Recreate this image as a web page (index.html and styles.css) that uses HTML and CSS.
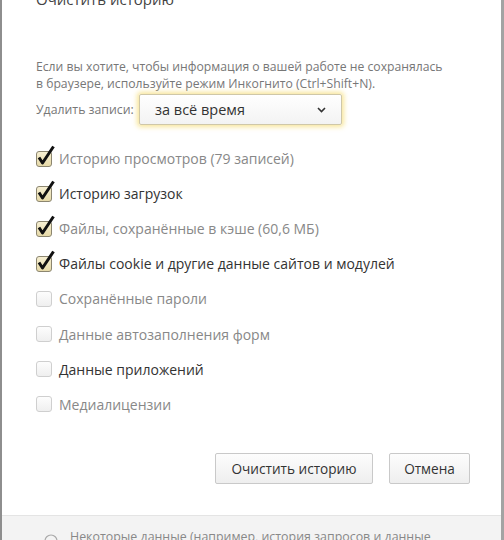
FILE: index.html
```html
<!DOCTYPE html>
<html lang="ru">
<head>
<meta charset="utf-8">
<link rel="stylesheet" href="styles.css">
</head>
<body>
<div class="dialog">
  <div class="content">
    <h1 class="title">Очистить историю</h1>
    <p class="desc">Если вы хотите, чтобы информация о вашей работе не сохранялась<br>в браузере, используйте режим Инкогнито (Ctrl+Shift+N).</p>
    <div class="period">
      <span class="period-label">Удалить записи:</span>
      <div class="select">
        <span>за всё время</span>
        <svg class="chev" width="9" height="6" viewBox="0 0 9 6"><path d="M1 1 L4.5 4.5 L8 1" fill="none" stroke="#333" stroke-width="1.6"/></svg>
      </div>
    </div>
    <ul class="list">
      <li class="item muted"><span class="cb"><span class="box on"></span><svg class="tick" width="20" height="22" viewBox="0 0 20 22"><path d="M3 12.5 L6.5 18 L17.5 1.5" fill="none" stroke="#111" stroke-width="3" stroke-linejoin="round"/></svg></span>Историю просмотров (79 записей)</li>
      <li class="item"><span class="cb"><span class="box on"></span><svg class="tick" width="20" height="22" viewBox="0 0 20 22"><path d="M3 12.5 L6.5 18 L17.5 1.5" fill="none" stroke="#111" stroke-width="3" stroke-linejoin="round"/></svg></span>Историю загрузок</li>
      <li class="item muted"><span class="cb"><span class="box on"></span><svg class="tick" width="20" height="22" viewBox="0 0 20 22"><path d="M3 12.5 L6.5 18 L17.5 1.5" fill="none" stroke="#111" stroke-width="3" stroke-linejoin="round"/></svg></span>Файлы, сохранённые в кэше (60,6 МБ)</li>
      <li class="item"><span class="cb"><span class="box on"></span><svg class="tick" width="20" height="22" viewBox="0 0 20 22"><path d="M3 12.5 L6.5 18 L17.5 1.5" fill="none" stroke="#111" stroke-width="3" stroke-linejoin="round"/></svg></span>Файлы cookie и другие данные сайтов и модулей</li>
      <li class="item muted"><span class="cb"><span class="box"></span></span>Сохранённые пароли</li>
      <li class="item muted"><span class="cb"><span class="box"></span></span>Данные автозаполнения форм</li>
      <li class="item"><span class="cb"><span class="box"></span></span>Данные приложений</li>
      <li class="item muted"><span class="cb"><span class="box"></span></span>Медиалицензии</li>
    </ul>
    <div class="actions">
      <button class="btn btn-clear">Очистить историю</button>
      <button class="btn btn-cancel">Отмена</button>
    </div>
  </div>
  <div class="footer">
    <svg class="info" width="14" height="14" viewBox="0 0 14 14"><circle cx="7" cy="7" r="6" fill="none" stroke="#aaa" stroke-width="1.2"/></svg>
    <span>Некоторые данные (например, история запросов и данные</span>
  </div>
</div>
</body>
</html>
```

FILE: styles.css
```css
* { box-sizing: border-box; }
html, body { margin: 0; padding: 0; }
body {
  width: 504px;
  height: 540px;
  overflow: hidden;
  background: #fff;
  font-family: "Open Sans", "Noto Sans", sans-serif;
}
.dialog {
  width: 504px;
  height: 540px;
  display: flex;
  flex-direction: column;
  border-left: 2px solid #8e8e8e;
  border-right: 3px solid #a3a3a3;
  background: #fff;
  overflow: hidden;
}
.content {
  padding-left: 34px;
  padding-right: 31px;
  flex: 1;
  display: flex;
  flex-direction: column;
}
.title {
  margin: -13px 0 0 0;
  font-size: 15px;
  line-height: 24px;
  font-weight: 400;
  color: #444;
}
.desc {
  margin: 47px 0 0 0;
  font-size: 12.2px;
  line-height: 17px;
  color: #777;
}
.period {
  display: flex;
  align-items: center;
  margin-top: 2px;
}
.period-label {
  font-size: 12.3px;
  color: #777;
  width: 103px;
}
.select {
  width: 203px;
  height: 31px;
  border: 1px solid #cfc7a8;
  border-radius: 2px;
  background: linear-gradient(#fff, #f3f3f3);
  box-shadow: 0 0 5px 2px rgba(246, 222, 120, 0.75);
  display: flex;
  align-items: center;
  justify-content: space-between;
  padding: 0 15px 0 15px;
  font-size: 14.5px;
  color: #333;
}
.chev { margin-top: 1px; }
.list {
  list-style: none;
  margin: 16px 0 0 0;
  padding: 0;
}
.item {
  height: 35.1px;
  display: flex;
  align-items: center;
  font-size: 14px;
  color: #333;
}
.item.muted { color: #888; }
.cb {
  position: relative;
  width: 23px;
  height: 16px;
  display: flex;
  align-items: center;
  flex: none;
}
.box {
  flex: none;
  display: block;
  width: 16px;
  height: 16px;
  border: 1px solid #cfcfcf;
  border-radius: 3px;
  background: linear-gradient(#fdfdfd, #efefef);
}
.box.on {
  border: 1px solid #8c8670;
  background: linear-gradient(#f6efd2, #e6d9a8);
}
.tick {
  position: absolute;
  left: 0;
  top: -6px;
  display: block;
}
.actions {
  display: flex;
  justify-content: flex-end;
  gap: 16px;
  margin-top: 31px;
}
.btn {
  height: 31px;
  border: 1px solid #c9c9c9;
  border-radius: 2px;
  background: linear-gradient(#fdfdfd, #eeeeee);
  font-family: "Open Sans", "Noto Sans", sans-serif;
  font-size: 13.6px;
  color: #333;
  padding: 0;
}
.btn-clear { width: 158px; }
.btn-cancel { width: 81px; }
.footer {
  height: 25px;
  background: #f3f3f3;
  border-top: 1px solid #e4e4e4;
  display: flex;
  align-items: flex-start;
  padding: 12px 0 0 42px;
  gap: 12px;
  font-size: 12.4px;
  color: #888;
}
.info { margin-top: 6px; flex: none; }
.footer span { white-space: nowrap; }
```
